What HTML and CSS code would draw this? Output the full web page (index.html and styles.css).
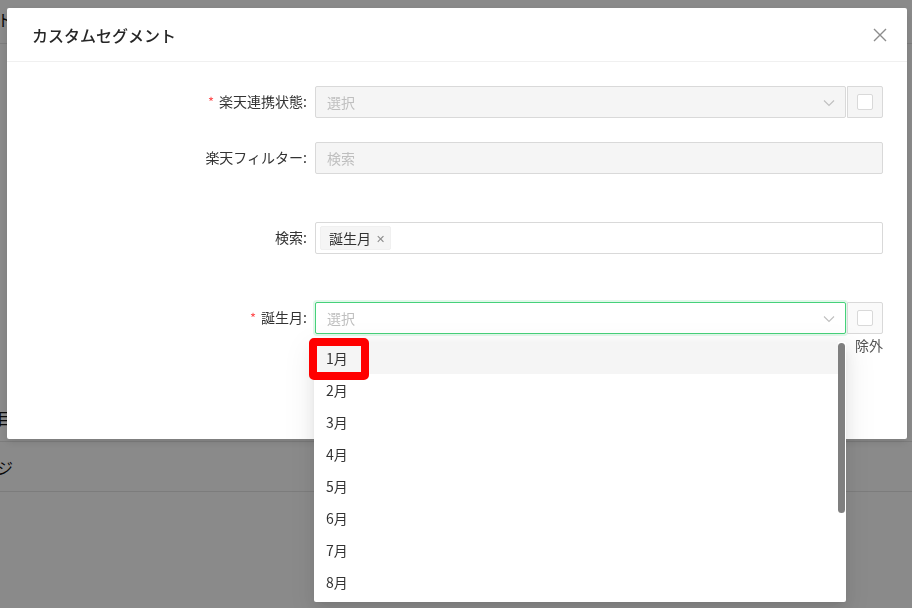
FILE: index.html
```html
<!DOCTYPE html>
<html lang="ja">
<head>
<meta charset="utf-8">
<title>カスタムセグメント</title>
<link rel="stylesheet" href="styles.css">
</head>
<body>
<div class="page">
  <div class="bg-top"><div class="bg-clip"><span>ト</span></div></div>
  <div class="bg-spacer"></div>
  <div class="bg-row bg-row1"><div class="bg-clip"><span class="bg-tab">目</span></div></div>
  <div class="bg-row bg-row2"><div class="bg-clip"><span>ジ</span></div></div>
</div>
<div class="mask"></div>

<div class="modal">
  <div class="modal-header">
    <div class="modal-title">カスタムセグメント</div>
    <svg class="close" width="14" height="14" viewBox="0 0 14 14"><path d="M1 1L13 13M13 1L1 13" stroke="#8c8c8c" stroke-width="1.4" fill="none"/></svg>
  </div>
  <div class="modal-body">
    <div class="row">
      <div class="label"><span class="req">*</span>楽天連携状態:</div>
      <div class="control">
        <div class="select disabled"><span class="ph">選択</span><svg class="arrow" width="12" height="8" viewBox="0 0 12 8"><path d="M1 1.5L6 6.5L11 1.5" stroke="#bfbfbf" stroke-width="1.1" fill="none"/></svg></div>
        <div class="addon-wrap"><div class="addon"><span class="cb"></span></div></div>
      </div>
    </div>
    <div class="row">
      <div class="label">楽天フィルター:</div>
      <div class="control">
        <div class="input disabled"><span class="ph">検索</span></div>
      </div>
    </div>
    <div class="row gap-lg">
      <div class="label">検索:</div>
      <div class="control">
        <div class="input tags"><span class="tag">誕生月<span class="tag-x">✕</span></span></div>
      </div>
    </div>
    <div class="row gap-lg">
      <div class="label"><span class="req">*</span>誕生月:</div>
      <div class="control">
        <div class="select focused"><span class="ph">選択</span><svg class="arrow" width="12" height="8" viewBox="0 0 12 8"><path d="M1 1.5L6 6.5L11 1.5" stroke="#bfbfbf" stroke-width="1.1" fill="none"/></svg></div>
        <div class="addon-wrap"><div class="addon light"><span class="cb"></span></div><div class="exclude">除外</div></div>
      </div>
    </div>
  </div>
</div>

<div class="dropdown">
  <div class="options">
    <div class="option active">1月</div>
    <div class="option">2月</div>
    <div class="option">3月</div>
    <div class="option">4月</div>
    <div class="option">5月</div>
    <div class="option">6月</div>
    <div class="option">7月</div>
    <div class="option">8月</div>
    <div class="option">9月</div>
    <div class="option">10月</div>
    <div class="option">11月</div>
    <div class="option">12月</div>
  </div>
  <div class="thumb"></div>
</div>

<div class="highlight"></div>
</body>
</html>
```

FILE: styles.css
```css
* { box-sizing: border-box; }
html, body { margin: 0; padding: 0; }
body {
  width: 912px;
  height: 608px;
  overflow: hidden;
  background: #fff;
  font-family: "Noto Sans CJK JP", "Noto Sans", sans-serif;
  font-size: 14px;
  color: #333;
}

/* background page */
.page { width: 912px; }
.bg-top {
  height: 44px;
  border-bottom: 1px solid #e6e6e6;
  display: flex;
  align-items: center;
  padding-bottom: 6px;
}
.bg-clip {
  width: 13px;
  overflow: hidden;
  display: flex;
  justify-content: flex-end;
  white-space: nowrap;
  font-size: 16px;
  color: #111;
}
.bg-spacer { height: 356px; }
.bg-row {
  display: flex;
  align-items: center;
  border-bottom: 1px solid #e6e6e6;
}
.bg-row1 { height: 42px; padding-bottom: 6px; }
.bg-row2 { height: 50px; }
.bg-tab { box-shadow: inset -1px 0 0 #f0a030; }

.mask {
  position: fixed;
  inset: 0;
  background: rgba(0, 0, 0, 0.46);
}

/* modal */
.modal {
  position: fixed;
  left: 7px;
  top: 8px;
  width: 900px;
  height: 431px;
  background: #fff;
  border-radius: 2px;
  box-shadow: 0 3px 8px rgba(0, 0, 0, 0.12);
}
.modal-header {
  height: 54px;
  padding: 0 20px 0 24px;
  display: flex;
  align-items: center;
  justify-content: space-between;
  border-bottom: 1px solid #f0f0f0;
}
.modal-title {
  font-size: 16px;
  font-weight: 500;
  color: #262626;
  padding-left: 1px;
}

.modal-body { padding: 24px 24px 0 0; }
.row {
  display: grid;
  grid-template-columns: 300px 1fr;
  column-gap: 8px;
  margin-top: 24px;
}
.row:first-child { margin-top: 0; }
.row.gap-lg { margin-top: 48px; }
.label {
  text-align: right;
  line-height: 31px;
  color: #333;
  white-space: nowrap;
}
.req {
  color: #ff4d4f;
  font-size: 13px;
  margin-right: 5px;
}
.control { display: flex; align-items: flex-start; }

.select, .input {
  flex: 1;
  height: 32px;
  border: 1px solid #d9d9d9;
  border-radius: 2px;
  background: #fff;
  display: flex;
  align-items: center;
  padding: 0 10px 0 11px;
}
.select { justify-content: space-between; }
.disabled { background: #f5f5f5; }
.ph { color: #bfbfbf; }
.select.focused {
  border-color: #46d17a;
  box-shadow: 0 0 0 2px rgba(70, 209, 122, 0.16);
}
.arrow { margin-top: 1px; }

.addon-wrap {
  width: 37px;
  display: flex;
  flex-direction: column;
  align-items: stretch;
}
.addon {
  height: 32px;
  border: 1px solid #d9d9d9;
  border-radius: 0 2px 2px 0;
  background: #f5f5f5;
  margin-left: 1px;
  display: flex;
  align-items: center;
  justify-content: center;
}
.addon.light { background: #fafafa; }
.cb {
  width: 16px;
  height: 16px;
  border: 1px solid #d9d9d9;
  border-radius: 2px;
  background: #fff;
}
.exclude {
  text-align: right;
  line-height: 22px;
  margin-right: 0;
  color: #555;
  white-space: nowrap;
}

.tags { padding: 0 4px; }
.tag {
  height: 24px;
  display: inline-flex;
  align-items: center;
  background: #f5f5f5;
  border: 1px solid #f0f0f0;
  border-radius: 2px;
  padding: 0 5px 0 8px;
  color: #333;
}
.tag-x {
  font-size: 11px;
  color: #8c8c8c;
  margin-left: 5px;
}

/* dropdown */
.dropdown {
  position: fixed;
  left: 314px;
  top: 342px;
  width: 532px;
  height: 260px;
  background: #fff;
  border-radius: 2px;
  padding-bottom: 4px;
  overflow: hidden;
  box-shadow: 0 3px 6px -4px rgba(0, 0, 0, 0.12), 0 6px 16px 0 rgba(0, 0, 0, 0.08), 0 9px 28px 8px rgba(0, 0, 0, 0.05);
}
.options { height: 256px; overflow: hidden; margin-right: 8px; }
.option {
  height: 32px;
  line-height: 32px;
  padding: 0 12px;
  color: #333;
}
.option.active { background: #f5f5f5; }
.thumb {
  position: absolute;
  right: 1px;
  top: 1px;
  width: 7px;
  height: 170px;
  border-radius: 4px;
  background: #7f7f7f;
}

.highlight {
  position: fixed;
  left: 309px;
  top: 338px;
  width: 60px;
  height: 42px;
  border: 8px solid #ff0000;
  border-radius: 5px;
}
```
